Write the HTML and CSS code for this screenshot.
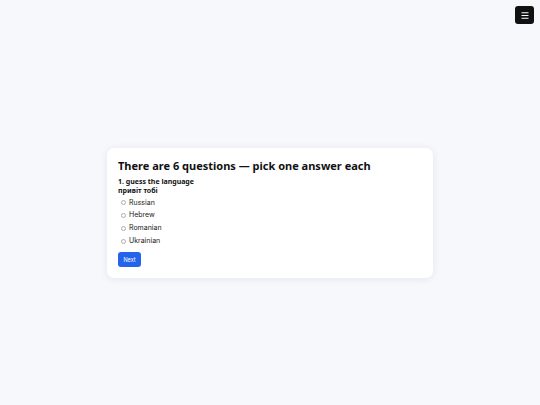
FILE: index.html
```html
<!DOCTYPE html>
<html lang="en">
<head>
  <meta charset="UTF-8">
  <title>Language quiz</title>
  <link rel="stylesheet" href="styles.css">
</head>
<body>

  <button class="menu-btn" aria-label="Menu">
    <svg width="8" height="7" viewBox="0 0 8 7">
      <path d="M0.5 0.75h7M0.5 3.5h7M0.5 6.25h7" stroke="#fff" stroke-width="1"/>
    </svg>
  </button>

  <main class="stage">
    <div class="card">
      <h1 class="title">There are 6 questions — pick one answer each</h1>
      <div class="question">1. guess the language</div>
      <div class="phrase">привіт тобі</div>
      <div class="options">
        <label><input type="radio" name="q1" value="ru"> Russian</label>
        <label><input type="radio" name="q1" value="he"> Hebrew</label>
        <label><input type="radio" name="q1" value="ro"> Romanian</label>
        <label><input type="radio" name="q1" value="uk"> Ukrainian</label>
      </div>
      <button class="next-btn">Next</button>
    </div>
  </main>

</body>
</html>
```

FILE: styles.css
```css
html, body {
  margin: 0;
  height: 100%;
}

body {
  font-family: "Noto Sans", sans-serif;
  background-color: #f7f8fc;
  color: #111;
}

.menu-btn {
  position: fixed;
  top: 6px;
  right: 6px;
  width: 19px;
  height: 18px;
  border: none;
  border-radius: 3px;
  background-color: #111;
  padding: 0;
  display: flex;
  align-items: center;
  justify-content: center;
}

.stage {
  box-sizing: border-box;
  height: 100%;
  padding-top: 21px;
  display: flex;
  align-items: center;
  justify-content: center;
}

.card {
  width: 304px;
  padding: 11px 11px 11px;
  background-color: #fff;
  border-radius: 7px;
  box-shadow: 0 1px 8px rgba(20, 30, 60, 0.08);
}

.title {
  margin: 0 0 4px;
  font-size: 11px;
  font-weight: bold;
  line-height: 14px;
}

.question,
.phrase {
  font-size: 7px;
  font-weight: bold;
  line-height: 9.5px;
}

.options {
  margin-top: 1px;
  display: flex;
  flex-direction: column;
}

.options label {
  font-family: Inter, sans-serif;
  font-size: 7px;
  line-height: 12.7px;
  color: #222;
  display: flex;
  align-items: center;
}

input[type="radio"] {
  width: 5px;
  height: 5px;
  margin: 0 3px 0 3px;
  opacity: 0.6;
}

.next-btn {
  display: block;
  margin-top: 5px;
  width: 23px;
  height: 15px;
  padding: 0;
  border: none;
  border-radius: 3px;
  background-color: #2563eb;
  color: #fff;
  font-family: Inter, sans-serif;
  font-size: 5.5px;
}
```
